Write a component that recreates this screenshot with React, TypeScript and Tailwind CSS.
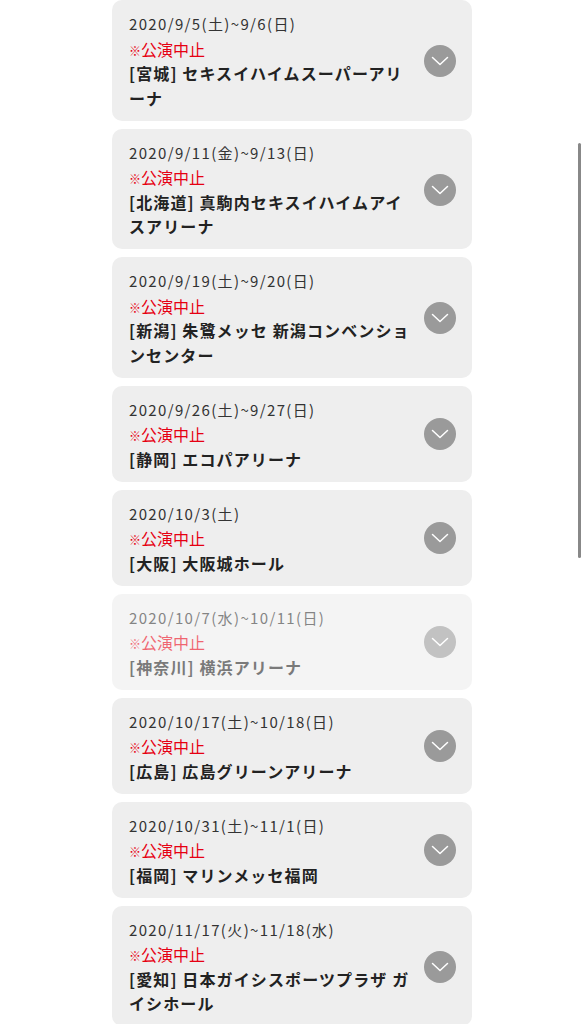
const events = [
  { date: '2020/9/5(土)~9/6(日)', name: ['[宮城] セキスイハイムスーパーアリ', 'ーナ'] },
  { date: '2020/9/11(金)~9/13(日)', name: ['[北海道] 真駒内セキスイハイムアイ', 'スアリーナ'] },
  { date: '2020/9/19(土)~9/20(日)', name: ['[新潟] 朱鷺メッセ 新潟コンベンショ', 'ンセンター'] },
  { date: '2020/9/26(土)~9/27(日)', name: ['[静岡] エコパアリーナ'] },
  { date: '2020/10/3(土)', name: ['[大阪] 大阪城ホール'] },
  { date: '2020/10/7(水)~10/11(日)', name: ['[神奈川] 横浜アリーナ'], faded: true },
  { date: '2020/10/17(土)~10/18(日)', name: ['[広島] 広島グリーンアリーナ'] },
  { date: '2020/10/31(土)~11/1(日)', name: ['[福岡] マリンメッセ福岡'] },
  { date: '2020/11/17(火)~11/18(水)', name: ['[愛知] 日本ガイシスポーツプラザ ガ', 'イシホール'] },
]

function Chevron() {
  return (
    <span className="flex h-8 w-8 shrink-0 items-center justify-center rounded-full bg-[#9a9a9a]">
      <svg width="18" height="10" viewBox="0 0 18 10" fill="none">
        <path d="M1.5 1.5 L9 8.5 L16.5 1.5" stroke="white" strokeWidth="1.5" strokeLinecap="round" strokeLinejoin="round" />
      </svg>
    </span>
  )
}

export default function App() {
  return (
    <div className="relative min-h-[1024px] w-full overflow-hidden bg-white font-['Noto_Sans_CJK_JP','Noto_Sans',sans-serif]">
      <ul className="ml-[112px] flex w-[360px] flex-col gap-2">
        {events.map((ev) => (
          <li
            key={ev.date}
            className={`flex items-center rounded-[10px] bg-[#eeeeee] pb-[10.5px] pl-[17px] pr-4 pt-3 ${ev.faded ? 'opacity-60' : ''}`}
          >
            <div className="flex-1">
              <p className="text-[15px] leading-[24.5px] tracking-[0.09em] text-[#333]">{ev.date}</p>
              <p className="text-[16px] leading-[24.5px] text-[#e60012]">
                <span className="text-[12px] leading-none">※</span>公演中止
              </p>
              <p className="text-[16px] font-bold leading-[24.5px] tracking-[0.07em] text-[#222]">
                {ev.name.map((line) => (
                  <span key={line} className="block whitespace-nowrap">{line}</span>
                ))}
              </p>
            </div>
            <Chevron />
          </li>
        ))}
      </ul>

      {/* overlay scrollbar */}
      <div className="absolute left-[578px] top-[143px] h-[415px] w-[3px] rounded-full bg-[#888]" />
    </div>
  )
}
